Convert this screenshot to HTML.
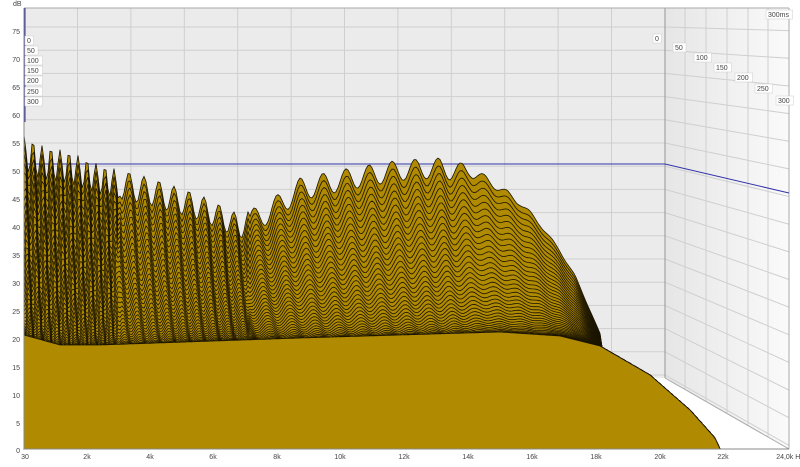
<!DOCTYPE html>
<html><head><meta charset="utf-8"><style>
body{margin:0;background:#fff;width:800px;height:462px;overflow:hidden;font-family:"Liberation Sans",sans-serif}
svg text{font-family:"Liberation Sans",sans-serif;font-size:7px;fill:#444}
</style></head><body>
<svg id="s" width="800" height="462" viewBox="0 0 800 462" xmlns="http://www.w3.org/2000/svg">
<defs><linearGradient id="rg" x1="0" x2="1"><stop offset="0" stop-color="#e6e6e6"/><stop offset="1" stop-color="#fafafa"/></linearGradient></defs>
<rect x="24" y="8" width="641" height="370" fill="#ebebeb"/>
<polygon points="665,8 789,8 789,449 665,378" fill="url(#rg)"/>
<g id="grid" stroke="#cfcfcf" stroke-width="1" fill="none"></g>
<line x1="665" y1="8" x2="665" y2="378" stroke="#999"/>
<line x1="665" y1="378" x2="789" y2="449" stroke="#aaa"/>
<line x1="24" y1="8" x2="789" y2="8" stroke="#aaa"/>
<line x1="789" y1="8" x2="789" y2="449" stroke="#aaa"/>
<line x1="25" y1="8" x2="25" y2="122" stroke="#3333aa"/>
<polyline points="24,164 665,164 789,193" stroke="#3333aa" fill="none"/>
<g id="wf" stroke="#1a1400" stroke-width="0.8" fill="#b08a00"></g>
<line x1="24" y1="449" x2="789" y2="449" stroke="#888"/>
<line x1="24" y1="8" x2="24" y2="449" stroke="#888"/>
<text x="13" y="6">dB</text>
<g text-anchor="end">
<text x="20" y="34">75</text><text x="20" y="62">70</text><text x="20" y="90">65</text><text x="20" y="118">60</text><text x="20" y="146">55</text><text x="20" y="174">50</text><text x="20" y="202">45</text><text x="20" y="230">40</text><text x="20" y="258">35</text><text x="20" y="286">30</text><text x="20" y="314">25</text><text x="20" y="342">20</text><text x="20" y="370">15</text><text x="20" y="398">10</text><text x="20" y="426">5</text><text x="20" y="453">0</text>
</g>
<g text-anchor="middle">
<text x="25" y="459">30</text><text x="87" y="459">2k</text><text x="150" y="459">4k</text><text x="213" y="459">6k</text><text x="277" y="459">8k</text><text x="340" y="459">10k</text><text x="404" y="459">12k</text><text x="468" y="459">14k</text><text x="532" y="459">16k</text><text x="596" y="459">18k</text><text x="660" y="459">20k</text><text x="723" y="459">22k</text><text x="790" y="459">24,0k Hz</text>
</g>
<g id="tags"></g>
</svg>
<script>
(function(){
var NS="http://www.w3.org/2000/svg";
function el(p,n,a){var e=document.createElementNS(NS,n);for(var k in a)e.setAttribute(k,a[k]);p.appendChild(e);return e;}
var g=document.getElementById('grid');
for(var y=27;y<378;y+=23.2){el(g,'line',{x1:24,y1:y,x2:665,y2:y});el(g,'line',{x1:665,y1:y,x2:789,y2:y+71*(y-8)/370});}
for(var x=77.5;x<665;x+=53.4)el(g,'line',{x1:x,y1:8,x2:x,y2:378});
[685,706,727,748,768].forEach(function(x){el(g,'line',{x1:x,y1:8,x2:x,y2:378+(x-665)*71/124});});
var tg=document.getElementById('tags');
function tag(x,y,t){el(tg,'rect',{x:x,y:y,width:t.length*4.5+4,height:9,fill:'#fff',stroke:'#ccc','stroke-width':0.5});var tx=el(tg,'text',{x:x+2,y:y+7});tx.textContent=t;}
[['0',36],['50',46],['100',56],['150',66],['200',76],['250',87],['300',97]].forEach(function(a){tag(25,a[1],a[0]);});
tag(653,34,'0');tag(673,43,'50');tag(694,53,'100');tag(714,63,'150');tag(735,73,'200');tag(755,84,'250');tag(776,96,'300');tag(766,10,'300ms');
function interp(pts,x){for(var i=1;i<pts.length;i++){if(x<=pts[i][0]){var a=pts[i-1],b=pts[i];return a[1]+(b[1]-a[1])*(x-a[0])/(b[0]-a[0]);}}return pts[pts.length-1][1];}
var tp=[[24,135],[40,145],[70,152],[100,165],[150,178],[200,195],[240,215],[270,200],[300,178],[350,168],[400,160],[440,158],[470,165],[500,185],[520,200],[540,222],[560,250],[575,275],[590,310],[605,345],[650,375],[690,410],[715,438],[720,449]];
var bt=[[24,335],[60,345],[100,345],[300,338],[500,332],[560,336],[600,346],[650,375],[690,410],[715,438],[720,449]];
var am=[[24,40],[120,32],[250,26],[450,22],[480,10],[560,3],[600,0],[720,0]];
var wf=document.getElementById('wf');var N=36;
for(var i=0;i<=N;i++){var f=Math.pow(1-i/N,1.6);var d='M24,449 ';
for(var x=24;x<=720;x+=2){var t=interp(tp,x),b=interp(bt,x);
var per=x<120?9:(x<250?15:23);var amp=interp(am,x)*Math.sqrt(f)*0.9;
var base=b+(t-b)*f;
var y=base + amp*(0.5-0.5*Math.cos((x-24)*2*Math.PI/per - i*0.15));
y=Math.min(y,b+2);
if(x>600)y=Math.max(y,b);d+='L'+x+','+y.toFixed(1)+' ';}
d+='L720,449 Z';el(wf,'path',{d:d});}
})();
</script>
</body></html>
